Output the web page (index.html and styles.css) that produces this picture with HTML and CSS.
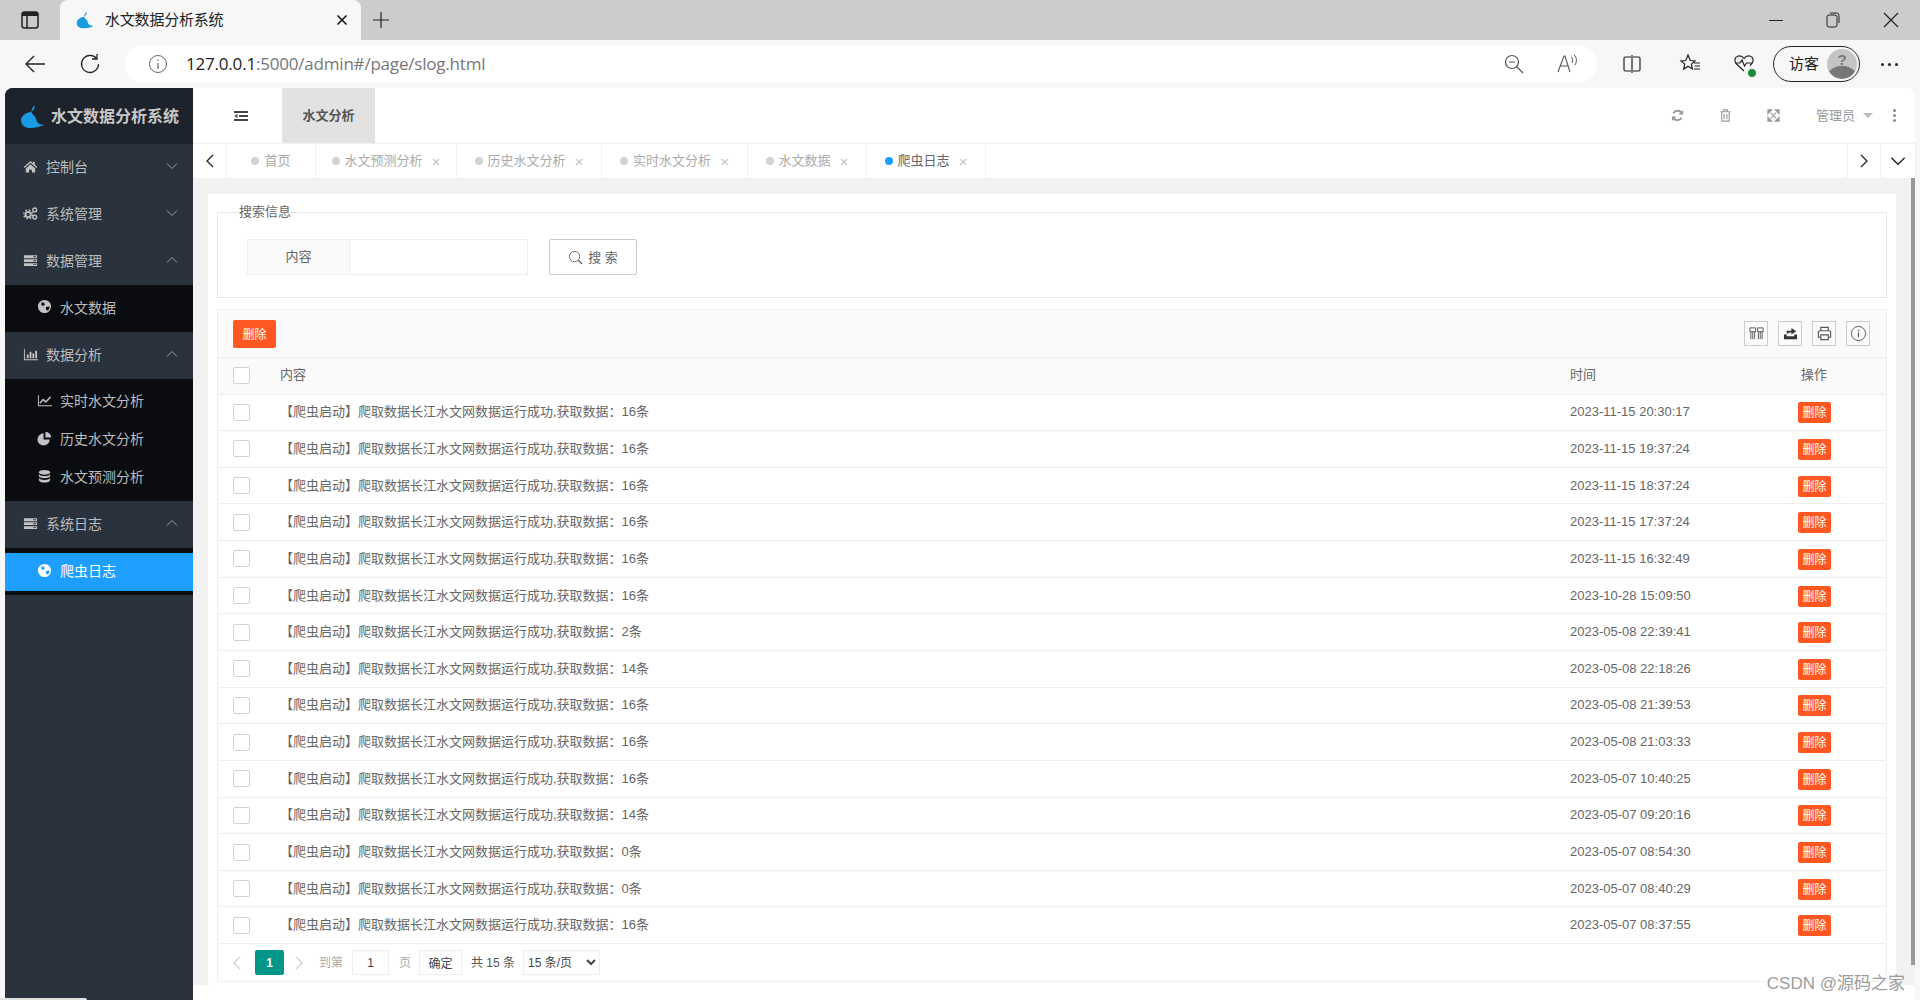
FILE: index.html
```html
<!DOCTYPE html>
<html lang="zh-CN">
<head>
    <meta charset="UTF-8">
    <title>水文数据分析系统</title>
    <link rel="stylesheet" href="styles.css">
</head>
<body>

    <!-- icones usados na pagina -->
    <svg class="sprite" xmlns="http://www.w3.org/2000/svg">
        <symbol id="i-drop" viewBox="0 0 24 24"><path d="M14 1c.5 3-1 5-3 6.500C5 8.500 1 11.500 1 15.500 1 20.500 5 23 10 23c5 0 10-1 13.500-3-3.500 0-6.500-1-7.500-4-.8-3-2-5-4-6.500C10.500 8.200 10.500 5 14 1z"/></symbol>
        <symbol id="i-home" viewBox="0 0 16 16"><path d="M8 2 .8 8.500l.9 1L8 3.900l6.300 5.600.9-1L12.600 6.200V3h-1.900v1.500zM3 10l5-4.400 5 4.400v4.500H9.500v-3h-3v3H3z"/></symbol>
        <symbol id="i-cogs" viewBox="0 0 16 16"><circle cx="5.500" cy="9" r="2.800" fill="none" stroke="currentColor" stroke-width="2"/><circle cx="5.500" cy="9" r="4.700" fill="none" stroke="currentColor" stroke-width="1.500" stroke-dasharray="1.800 1.900"/><circle cx="12.500" cy="4.200" r="2" fill="none" stroke="currentColor" stroke-width="1.500"/><circle cx="12.500" cy="11.800" r="2" fill="none" stroke="currentColor" stroke-width="1.500"/></symbol>
        <symbol id="i-server" viewBox="0 0 16 16"><path d="M1 2.500h14v3H1zM1 6.700h14v3H1zM1 10.900h14v3H1z"/><path d="M11 3.500h3v1h-3zM11 7.700h3v1h-3zM11 11.900h3v1h-3z" fill="#29323d"/></symbol>
        <symbol id="i-globe" viewBox="0 0 16 16"><path fill-rule="evenodd" d="M8 1a7 7 0 1 0 0 14A7 7 0 0 0 8 1zM5 3.500l2.500.5 1 2L6 7.500 4.500 6zm4.500 5 3.500-.5.500 1.500-2 3-2-1.500z"/></symbol>
        <symbol id="i-bar" viewBox="0 0 16 16"><path d="M1 2h1v11h14v1H1zM4 8h2v4H4zM7 5h2v7H7zM10 7h2v5h-2zM13 4h2v8h-2z"/></symbol>
        <symbol id="i-line" viewBox="0 0 16 16"><path d="M1 2h1v11h14v1H1z"/><path d="M3 11l3.500-4 3 2.500L14.500 4" fill="none" stroke="currentColor" stroke-width="1.600"/></symbol>
        <symbol id="i-pie" viewBox="0 0 16 16"><path d="M7 2.500a6.500 6.500 0 1 0 6.500 6.500H7zM9 .8v6h6.200A6.200 6.200 0 0 0 9 .8z"/></symbol>
        <symbol id="i-db" viewBox="0 0 16 16"><ellipse cx="8" cy="3.500" rx="6" ry="2.500"/><path d="M2 5.300c1 1.700 3.500 2.200 6 2.200s5-.5 6-2.200v2.500c-1 1.500-3.500 2.100-6 2.100s-5-.6-6-2.100zM2 9.600c1 1.600 3.500 2.100 6 2.100s5-.5 6-2.100v2.700C13 14 10.500 14.500 8 14.500S3 14 2 12.300z"/></symbol>
        <symbol id="i-down" viewBox="0 0 12 12"><path d="M1 3.500 6 8.500l5-5" fill="none" stroke="currentColor" stroke-width="1"/></symbol>
        <symbol id="i-up" viewBox="0 0 12 12"><path d="M1 8.500 6 3.500l5 5" fill="none" stroke="currentColor" stroke-width="1"/></symbol>
        <symbol id="i-left" viewBox="0 0 12 16"><path d="M9 2 3 8l6 6" fill="none" stroke="currentColor" stroke-width="1.300"/></symbol>
        <symbol id="i-right" viewBox="0 0 12 16"><path d="M3 2l6 6-6 6" fill="none" stroke="currentColor" stroke-width="1.300"/></symbol>
    </svg>

    <!-- barra do navegador -->
    <div class="tabstrip">
        <svg class="win-panel" viewBox="0 0 20 20" width="20" height="20"><rect x="2" y="2" width="16" height="16" rx="2.500" fill="none" stroke="#222" stroke-width="1.500"/><path d="M2 4.500A2.500 2.500 0 0 1 4.500 2h11A2.500 2.500 0 0 1 18 4.500V6H2z" fill="#222"/><path d="M7 6v12" stroke="#222" stroke-width="1.500"/></svg>
        <div class="browser-tab">
            <svg class="browser-tab-icon"><use href="#i-drop"/></svg>
            <span class="browser-tab-title">水文数据分析系统</span>
            <svg class="browser-tab-close" viewBox="0 0 12 12" width="12" height="12"><path d="M1.500 1.500l9 9M10.500 1.500l-9 9" stroke="#111" stroke-width="1.500"/></svg>
        </div>
        <svg class="new-tab" viewBox="0 0 18 18" width="18" height="18"><path d="M9 1v16M1 9h16" stroke="#222" stroke-width="1.200"/></svg>
        <div class="win-btns">
            <svg viewBox="0 0 14 14" width="14" height="14"><path d="M0 7.500h14" stroke="#222"/></svg>
            <svg viewBox="0 0 14 16" width="14" height="16"><rect x="1" y="3" width="10" height="12" rx="2" fill="none" stroke="#222"/><path d="M4 1h6.500A2.500 2.500 0 0 1 13 3.500V11" fill="none" stroke="#222"/></svg>
            <svg viewBox="0 0 16 16" width="16" height="16"><path d="M1 1l14 14M15 1 1 15" stroke="#222" stroke-width="1.200"/></svg>
        </div>
    </div>

    <div class="toolbar">
        <svg class="tool-back" viewBox="0 0 22 20" width="22" height="20"><path d="M21 10H2M10 2l-8 8 8 8" fill="none" stroke="#222" stroke-width="1.400"/></svg>
        <svg class="tool-reload" viewBox="0 0 22 22" width="22" height="22"><path d="M17.500 5.500A8.500 8.500 0 1 0 19.500 11" fill="none" stroke="#222" stroke-width="1.300"/><path d="M18 1v5h-5" fill="none" stroke="#222" stroke-width="1.300"/></svg>
        <div class="urlbar">
            <svg class="url-info" viewBox="0 0 20 20" width="20" height="20"><circle cx="10" cy="10" r="8.500" fill="none" stroke="#666"/><path d="M10 9v6M10 5.500v1.500" stroke="#666" stroke-width="1.200"/></svg>
            <span class="url-text"><b>127.0.0.1</b>:5000/admin#/page/slog.html</span>
            <svg class="url-zoom" viewBox="0 0 20 20" width="20" height="20"><circle cx="8" cy="8" r="6.500" fill="none" stroke="#555" stroke-width="1.200"/><path d="M13 13l6 6M5 8h6" stroke="#555" stroke-width="1.200"/></svg>
            <svg class="url-read" viewBox="0 0 22 20" width="22" height="20"><path d="M1 18 7 2h1l5 16M3.500 12h8" fill="none" stroke="#555" stroke-width="1.100"/><path d="M14 3c2 1 2 4 1 6M17 1c3 2 3 7 1 10" fill="none" stroke="#555"/></svg>
        </div>
        <svg class="tool-icon" viewBox="0 0 20 20" width="20" height="20"><path d="M9 3H3.500A1.500 1.500 0 0 0 2 4.500v11A1.500 1.500 0 0 0 3.500 17H9M11 3h5.500A1.500 1.500 0 0 1 18 4.500v11a1.500 1.500 0 0 1-1.500 1.500H11M10 1v18" fill="none" stroke="#222" stroke-width="1.200"/></svg>
        <svg class="tool-icon tool-fav" viewBox="0 0 22 22" width="22" height="22"><path d="M9 2l2.300 5.500 4.700.4-3.600 3.200 1 5-4.400-2.800-4.400 2.800 1.100-5L2 7.900l4.700-.4zM15 10h6M15.500 13h5.500M15 16h6" fill="none" stroke="#222" stroke-width="1.200"/></svg>
        <span class="tool-health">
            <svg viewBox="0 0 22 22" width="22" height="22"><path d="M11 18 3.500 11C1 8.500 1.500 4.500 4.500 3.300 7 2.400 9.500 3.300 11 5.500c1.500-2.200 4-3.100 6.500-2.200 3 1.200 3.500 5.200 1 7.700L17 12.500" fill="none" stroke="#222" stroke-width="1.200"/><path d="M2 10h5l2-3 2.500 6 2-3h6" fill="none" stroke="#222" stroke-width="1.200"/></svg>
            <span class="health-dot"></span>
        </span>
        <div class="profile">
            <span class="profile-name">访客</span>
            <span class="avatar"><span class="avatar-mark">?</span></span>
        </div>
        <span class="tool-more"><i></i><i></i><i></i></span>
    </div>

    <div class="page">
        <aside class="sidebar">
            <div class="logo">
                <svg class="logo-icon"><use href="#i-drop"/></svg>
                <span>水文数据分析系统</span>
            </div>
            <ul class="menu">
                <li class="menu-item"><svg class="ico"><use href="#i-home"/></svg>控制台<svg class="arrow"><use href="#i-down"/></svg></li>
                <li class="menu-item"><svg class="ico"><use href="#i-cogs"/></svg>系统管理<svg class="arrow"><use href="#i-down"/></svg></li>
                <li class="menu-item"><svg class="ico"><use href="#i-server"/></svg>数据管理<svg class="arrow"><use href="#i-up"/></svg></li>
                <li class="submenu">
                    <div class="sub-item sub-tall"><svg class="ico"><use href="#i-globe"/></svg>水文数据</div>
                </li>
                <li class="menu-item"><svg class="ico"><use href="#i-bar"/></svg>数据分析<svg class="arrow"><use href="#i-up"/></svg></li>
                <li class="submenu">
                    <div class="sub-item"><svg class="ico"><use href="#i-line"/></svg>实时水文分析</div>
                    <div class="sub-item"><svg class="ico"><use href="#i-pie"/></svg>历史水文分析</div>
                    <div class="sub-item"><svg class="ico"><use href="#i-db"/></svg>水文预测分析</div>
                </li>
                <li class="menu-item"><svg class="ico"><use href="#i-server"/></svg>系统日志<svg class="arrow"><use href="#i-up"/></svg></li>
                <li class="submenu">
                    <div class="sub-item active"><svg class="ico"><use href="#i-globe"/></svg>爬虫日志</div>
                </li>
            </ul>
        </aside>

        <div class="content">
            <header class="topbar">
                <svg class="burger" viewBox="0 0 14 10" width="14" height="10"><path d="M0 0h14v2H0zM5 4h9v2H5zM3.500 2.800 .5 5l3 2.200zM0 8h14v2H0z" fill="#444"/></svg>
                <div class="system-name">水文分析</div>
                <div class="top-right">
                    <svg class="top-icon" viewBox="0 0 14 14" width="13" height="13"><path d="M12 5.500A5.200 5.200 0 0 0 2.500 4.500M2 8.500a5.200 5.200 0 0 0 9.500 1" fill="none" stroke="#999" stroke-width="2"/><path d="M13 1v5H8zM1 13V8h5z" fill="#999"/></svg>
                    <svg class="top-icon" viewBox="0 0 14 14" width="13" height="13"><path d="M1.500 3h11M5 3V1h4v2M3 3.500V13h8V3.500M5.500 5.500v5.500M8.500 5.500v5.500" fill="none" stroke="#999" stroke-width="1.200"/></svg>
                    <svg class="top-icon" viewBox="0 0 14 14" width="13" height="13"><path d="M1 1h4L1 5zM13 1v4L9 1zM1 13V9l4 4zM13 13H9l4-4zM4 4l6 6M10 4l-6 6" fill="#999" stroke="#999" stroke-width="1.200"/></svg>
                    <span class="admin">管理员<i class="caret"></i></span>
                    <span class="top-dots"><i></i><i></i><i></i></span>
                </div>
            </header>

            <nav class="tabs">
                <button class="tab-arrow"><svg><use href="#i-left"/></svg></button>
                <div class="tab"><i class="dot"></i><span class="tab-name">首页</span></div>
                <div class="tab"><i class="dot"></i><span class="tab-name">水文预测分析</span><span class="tab-close">×</span></div>
                <div class="tab"><i class="dot"></i><span class="tab-name">历史水文分析</span><span class="tab-close">×</span></div>
                <div class="tab"><i class="dot"></i><span class="tab-name">实时水文分析</span><span class="tab-close">×</span></div>
                <div class="tab"><i class="dot"></i><span class="tab-name">水文数据</span><span class="tab-close">×</span></div>
                <div class="tab tab-on"><i class="dot"></i><span class="tab-name">爬虫日志</span><span class="tab-close">×</span></div>
                <button class="tab-arrow tab-next"><svg><use href="#i-right"/></svg></button>
                <button class="tab-arrow tab-down"><svg><use href="#i-down"/></svg></button>
            </nav>

            <main class="main">
                <div class="card">
                    <fieldset class="search">
                        <legend>搜索信息</legend>
                        <div class="search-row">
                            <label class="search-label">内容</label>
                            <input class="search-input" type="text">
                            <button class="search-btn">
                                <svg viewBox="0 0 16 16" width="15" height="15"><circle cx="7" cy="7" r="5.500" fill="none" stroke="#666"/><path d="M11 11l4 4" stroke="#666" stroke-width="1.500"/></svg>
                                <span>搜 索</span>
                            </button>
                        </div>
                    </fieldset>

                    <div class="list">
                        <div class="list-tools">
                            <button class="btn-del btn-del-big">删除</button>
                            <div class="list-icons">
                                <span class="tool-box"><svg viewBox="0 0 16 16" width="15" height="15"><path d="M1 2h6v4H1zM9 2h6v4H9zM2 6v8M4 6v8M6 6v8M10 6v8M12 6v8M14 6v8" fill="none" stroke="#555"/></svg></span>
                                <span class="tool-box"><svg viewBox="0 0 16 16" width="15" height="15"><path d="M1 9h3v2h8V9h3v5H1zM4 8V5h5V2l5 3.500L9 9V7H6v1z" fill="#333"/></svg></span>
                                <span class="tool-box"><svg viewBox="0 0 16 16" width="15" height="15"><path d="M4 5V1.500h8V5M4 12H1.500V6.500A1.500 1.500 0 0 1 3 5h10a1.500 1.500 0 0 1 1.500 1.500V12H12M4 9.500h8v5H4z" fill="none" stroke="#555" stroke-width="1.200"/></svg></span>
                                <span class="tool-box"><svg viewBox="0 0 18 18" width="17" height="17"><circle cx="9" cy="9" r="7.500" fill="none" stroke="#555"/><path d="M9 8v5M9 5v1.500" stroke="#555" stroke-width="1.200"/></svg></span>
                            </div>
                        </div>
                        <table class="log-table">
                            <colgroup>
                                <col class="col-check"><col><col class="col-time"><col class="col-op">
                            </colgroup>
                            <thead>
                                <tr><th><span class="check"></span></th><th class="cell-text">内容</th><th class="cell-text">时间</th><th class="cell-text th-op">操作</th></tr>
                            </thead>
                            <tbody>
                                <tr><td><span class="check"></span></td><td class="cell-text">【爬虫启动】爬取数据长江水文网数据运行成功,获取数据：16条</td><td class="cell-date">2023-11-15 20:30:17</td><td><button class="btn-del">删除</button></td></tr>
                                <tr><td><span class="check"></span></td><td class="cell-text">【爬虫启动】爬取数据长江水文网数据运行成功,获取数据：16条</td><td class="cell-date">2023-11-15 19:37:24</td><td><button class="btn-del">删除</button></td></tr>
                                <tr><td><span class="check"></span></td><td class="cell-text">【爬虫启动】爬取数据长江水文网数据运行成功,获取数据：16条</td><td class="cell-date">2023-11-15 18:37:24</td><td><button class="btn-del">删除</button></td></tr>
                                <tr><td><span class="check"></span></td><td class="cell-text">【爬虫启动】爬取数据长江水文网数据运行成功,获取数据：16条</td><td class="cell-date">2023-11-15 17:37:24</td><td><button class="btn-del">删除</button></td></tr>
                                <tr><td><span class="check"></span></td><td class="cell-text">【爬虫启动】爬取数据长江水文网数据运行成功,获取数据：16条</td><td class="cell-date">2023-11-15 16:32:49</td><td><button class="btn-del">删除</button></td></tr>
                                <tr><td><span class="check"></span></td><td class="cell-text">【爬虫启动】爬取数据长江水文网数据运行成功,获取数据：16条</td><td class="cell-date">2023-10-28 15:09:50</td><td><button class="btn-del">删除</button></td></tr>
                                <tr><td><span class="check"></span></td><td class="cell-text">【爬虫启动】爬取数据长江水文网数据运行成功,获取数据：2条</td><td class="cell-date">2023-05-08 22:39:41</td><td><button class="btn-del">删除</button></td></tr>
                                <tr><td><span class="check"></span></td><td class="cell-text">【爬虫启动】爬取数据长江水文网数据运行成功,获取数据：14条</td><td class="cell-date">2023-05-08 22:18:26</td><td><button class="btn-del">删除</button></td></tr>
                                <tr><td><span class="check"></span></td><td class="cell-text">【爬虫启动】爬取数据长江水文网数据运行成功,获取数据：16条</td><td class="cell-date">2023-05-08 21:39:53</td><td><button class="btn-del">删除</button></td></tr>
                                <tr><td><span class="check"></span></td><td class="cell-text">【爬虫启动】爬取数据长江水文网数据运行成功,获取数据：16条</td><td class="cell-date">2023-05-08 21:03:33</td><td><button class="btn-del">删除</button></td></tr>
                                <tr><td><span class="check"></span></td><td class="cell-text">【爬虫启动】爬取数据长江水文网数据运行成功,获取数据：16条</td><td class="cell-date">2023-05-07 10:40:25</td><td><button class="btn-del">删除</button></td></tr>
                                <tr><td><span class="check"></span></td><td class="cell-text">【爬虫启动】爬取数据长江水文网数据运行成功,获取数据：14条</td><td class="cell-date">2023-05-07 09:20:16</td><td><button class="btn-del">删除</button></td></tr>
                                <tr><td><span class="check"></span></td><td class="cell-text">【爬虫启动】爬取数据长江水文网数据运行成功,获取数据：0条</td><td class="cell-date">2023-05-07 08:54:30</td><td><button class="btn-del">删除</button></td></tr>
                                <tr><td><span class="check"></span></td><td class="cell-text">【爬虫启动】爬取数据长江水文网数据运行成功,获取数据：0条</td><td class="cell-date">2023-05-07 08:40:29</td><td><button class="btn-del">删除</button></td></tr>
                                <tr><td><span class="check"></span></td><td class="cell-text">【爬虫启动】爬取数据长江水文网数据运行成功,获取数据：16条</td><td class="cell-date">2023-05-07 08:37:55</td><td><button class="btn-del">删除</button></td></tr>
                            </tbody>
                        </table>
                        <div class="pager">
                            <svg class="pager-arrow"><use href="#i-left"/></svg>
                            <span class="pager-cur">1</span>
                            <svg class="pager-arrow"><use href="#i-right"/></svg>
                            <span class="pager-text pager-to">到第</span>
                            <input class="pager-input" type="text" value="1">
                            <span class="pager-text">页</span>
                            <button class="pager-ok">确定</button>
                            <span class="pager-total">共 15 条</span>
                            <select class="pager-size"><option>15 条/页</option></select>
                        </div>
                    </div>
                </div>
                <div class="scroll-thumb"></div>
            </main>
            <div class="watermark">CSDN @源码之家</div>
        </div>
    </div>
    <div class="status-bubble"></div>

</body>
</html>
```

FILE: styles.css
```css
* {
    margin: 0;
    padding: 0;
    box-sizing: border-box;
}
html, body {
    height: 100%;
    overflow: hidden;
}
body {
    font-family: "Liberation Sans", "Noto Sans CJK SC", sans-serif;
    font-size: 13px;
    color: #666;
    background-color: #f7f7f7;
    position: relative;
}
.sprite {
    display: none;
}
button {
    font-family: inherit;
    cursor: pointer;
}
i {
    font-style: normal;
}

/* navegador */
.tabstrip {
    height: 40px;
    background-color: #cccccc;
    display: flex;
    align-items: center;
    padding-left: 20px;
}
.win-panel {
    margin-right: 20px;
}
.browser-tab {
    width: 301px;
    height: 40px;
    background-color: #f7f7f7;
    border-radius: 8px 8px 0 0;
    display: flex;
    align-items: center;
    padding-left: 16px;
}
.browser-tab-icon {
    width: 18px;
    height: 18px;
    fill: #1a9ae0;
}
.browser-tab-title {
    margin-left: 11px;
    padding-bottom: 3px;
    font-size: 15px;
    letter-spacing: -0.2px;
    color: #222;
}
.browser-tab-close {
    margin-left: auto;
    margin-right: 13px;
}
.new-tab {
    margin-left: 11px;
}
.win-btns {
    margin-left: auto;
    display: flex;
    align-items: center;
    gap: 43px;
    padding-right: 21px;
}
.toolbar {
    height: 48px;
    background-color: #f7f7f7;
    display: flex;
    align-items: center;
    padding-left: 24px;
}
.tool-reload {
    margin-left: 33px;
}
.urlbar {
    width: 1472px;
    height: 38px;
    margin-left: 24px;
    background-color: #fff;
    border-radius: 19px;
    display: flex;
    align-items: center;
    padding-left: 23px;
}
.url-text {
    margin-left: 18px;
    padding-bottom: 2px;
    font-family: "Open Sans", sans-serif;
    font-size: 17px;
    letter-spacing: -0.2px;
    color: #777;
}
.url-text b {
    font-weight: normal;
    color: #222;
}
.url-zoom {
    margin-left: auto;
}
.url-read {
    margin-left: 33px;
    margin-right: 18px;
}
.tool-icon {
    margin-left: 25px;
}
.tool-fav {
    margin-left: 37px;
}
.tool-health {
    margin-left: 32px;
    position: relative;
    display: flex;
}
.health-dot {
    position: absolute;
    right: -2px;
    bottom: -3px;
    width: 10px;
    height: 10px;
    border-radius: 50%;
    background-color: #1a8a3a;
    border: 1px solid #f7f7f7;
}
.profile {
    width: 87px;
    height: 36px;
    margin-left: 18px;
    border: 1.5px solid #222;
    border-radius: 18px;
    display: flex;
    align-items: center;
    justify-content: space-between;
    padding: 0 2px 0 15px;
    font-size: 15px;
    color: #222;
}
.profile-name {
    padding-bottom: 3px;
}
.avatar {
    width: 30px;
    height: 30px;
    border-radius: 50%;
    background: radial-gradient(circle at 50% 115%, #777 0 46%, #c4c4c4 48%);
    display: flex;
    justify-content: center;
}
.avatar-mark {
    font-weight: bold;
    font-size: 15px;
    line-height: 22px;
    color: #777;
}
.tool-more {
    margin-left: 21px;
    display: flex;
    gap: 4px;
}
.tool-more i {
    width: 3px;
    height: 3px;
    border-radius: 50%;
    background-color: #222;
}

/* pagina */
.page {
    height: 912px;
    display: flex;
    padding: 0 5px;
}
.sidebar {
    width: 188px;
    background-color: #29323d;
    border-radius: 8px 0 0 0;
    flex-shrink: 0;
    overflow: hidden;
}
.logo {
    height: 56px;
    background-color: #1c232d;
    display: flex;
    align-items: center;
    padding-left: 15px;
    font-size: 16px;
    font-weight: bold;
    color: #c8c8c8;
}
.logo span {
    padding-bottom: 2px;
}
.logo-icon {
    width: 25px;
    height: 25px;
    fill: #1a9ae0;
    margin-right: 6px;
}
.menu {
    list-style: none;
}
.menu-item {
    height: 47px;
    display: flex;
    align-items: center;
    padding: 0 0 3px 18px;
    font-size: 14px;
    color: #bdbdbd;
}
.ico {
    width: 15px;
    height: 15px;
    fill: #c2c2c2;
    color: #c2c2c2;
    margin-right: 8px;
}
.arrow {
    width: 12px;
    height: 12px;
    color: #9a9fa5;
    margin-left: auto;
    margin-right: 15px;
}
.submenu {
    background-color: #0a0c10;
    padding: 4px 0;
}
.sub-item {
    height: 38px;
    display: flex;
    align-items: center;
    padding: 0 0 4px 32px;
    font-size: 14px;
    color: #bdbdbd;
}
.sub-tall {
    height: 39px;
}
.sub-item.active {
    background-color: #1e9fff;
    color: #fff;
    margin-top: 1px;
}
.active .ico {
    fill: #fff;
}

.content {
    flex: 1;
    background-color: #fff;
    position: relative;
    display: flex;
    flex-direction: column;
    border-radius: 0 8px 0 0;
    min-width: 0;
}
.topbar {
    height: 56px;
    display: flex;
    align-items: center;
    padding-left: 41px;
    border-bottom: 1px solid #f1f1f1;
    flex-shrink: 0;
}
.system-name {
    width: 93px;
    height: 55px;
    margin-left: 34px;
    padding-bottom: 2px;
    background-color: #e2e2e2;
    display: flex;
    align-items: center;
    justify-content: center;
    font-weight: bold;
    color: #555;
}
.top-right {
    margin-left: auto;
    display: flex;
    align-items: center;
    color: #999;
}
.top-icon {
    margin-right: 35px;
}
.admin {
    display: flex;
    align-items: center;
    font-size: 13px;
    margin-left: 1px;
    margin-right: 1px;
    padding-bottom: 2px;
}
.caret {
    width: 0;
    height: 0;
    margin: 2px 0 0 8px;
    border: 5px solid transparent;
    border-top-color: #bbb;
    border-bottom-width: 0;
}
.top-dots {
    display: flex;
    flex-direction: column;
    gap: 2px;
    margin: 0 19px 0 19px;
}
.top-dots i {
    width: 3px;
    height: 3px;
    background-color: #888;
    border-radius: 50%;
}

.tabs {
    height: 34px;
    display: flex;
    align-items: stretch;
    background-color: #fff;
    box-shadow: 0 1px 2px rgba(0, 0, 0, 0.08);
    position: relative;
    flex-shrink: 0;
}
.tab-arrow {
    width: 34px;
    background: none;
    border: none;
    border-right: 1px solid #f0f0f0;
    display: flex;
    align-items: center;
    justify-content: center;
    color: #222;
}
.tab-arrow svg {
    width: 12px;
    height: 16px;
}
.tab-next {
    margin-left: auto;
    border-left: 1px solid #f0f0f0;
    border-right: 1px solid #f0f0f0;
}
.tab-down {
    border-right: none;
}
.tab-down svg {
    width: 16px;
    height: 16px;
}
.tab {
    display: flex;
    align-items: center;
    justify-content: center;
    border-right: 1px solid #f2f2f2;
    color: #aaa;
}
.tab:nth-child(2) { width: 89px; }
.tab:nth-child(3) { width: 141px; }
.tab:nth-child(4) { width: 145px; }
.tab:nth-child(5) { width: 146px; }
.tab:nth-child(6) { width: 119px; }
.tab:nth-child(7) { width: 119px; }
.tab-name {
    padding-bottom: 3px;
}
.dot {
    width: 8px;
    height: 8px;
    border-radius: 50%;
    background-color: #d2d2d2;
    margin-right: 5px;
}
.tab-close {
    margin-left: 9px;
    font-size: 15px;
    line-height: 15px;
    color: #c2c2c2;
}
.tab-on {
    color: #666;
}
.tab-on .dot {
    background-color: #1e9fff;
}

.main {
    height: 807px;
    background-color: #f2f2f2;
    padding: 16px 19px 0 15px;
    position: relative;
    flex-shrink: 0;
}
.scroll-thumb {
    position: absolute;
    top: 0;
    right: 0;
    width: 4px;
    height: 787px;
    background-color: #999;
}
.card {
    height: 791px;
    background-color: #fff;
    border-radius: 2px;
    padding: 8px 9px 0;
}
.search {
    border: 1px solid #e6e6e6;
    height: 96px;
    padding: 17px 29px 0;
}
.search legend {
    margin-left: -8px;
    line-height: 20px;
    padding-bottom: 2px;
    height: 20px;
    color: #666;
}
.search-row {
    display: flex;
    align-items: flex-start;
}
.search-label {
    width: 103px;
    height: 36px;
    padding-bottom: 3px;
    border: 1px solid #eee;
    background-color: #fafafa;
    display: flex;
    align-items: center;
    justify-content: center;
}
.search-input {
    width: 178px;
    height: 36px;
    border: 1px solid #eee;
    border-left: none;
    outline: none;
}
.search-btn {
    width: 88px;
    height: 36px;
    margin-left: 21px;
    background-color: #fff;
    border: 1px solid #c9c9c9;
    border-radius: 2px;
    color: #666;
    font-size: 13px;
    display: flex;
    align-items: center;
    justify-content: center;
    gap: 5px;
}
.search-btn span {
    padding-bottom: 2px;
}
.list {
    margin-top: 11px;
    border: 1px solid #eee;
    border-top-color: #f2f2f2;
}
.list-tools {
    height: 48px;
    background-color: #fafafa;
    border-bottom: 1px solid #eee;
    display: flex;
    align-items: center;
    padding: 0 16px 0 15px;
}
.btn-del {
    width: 33px;
    height: 21px;
    padding-bottom: 2px;
    border: none;
    border-radius: 2px;
    background-color: #ff5722;
    color: #fff;
    font-size: 12px;
    display: block;
    margin: 1px 0 0 1px;
}
.btn-del-big {
    width: 43px;
    height: 28px;
    padding-bottom: 0;
    margin: 0;
}
.list-icons {
    margin-left: auto;
    display: flex;
    gap: 10px;
}
.tool-box {
    width: 24px;
    height: 25px;
    border: 1px solid #ccc;
    display: flex;
    align-items: center;
    justify-content: center;
}
.log-table {
    width: 100%;
    table-layout: fixed;
    border-collapse: collapse;
}
.col-check {
    width: 62px;
}
.col-time {
    width: 227px;
}
.col-op {
    width: 89px;
}
.log-table th {
    height: 36px;
    padding: 0;
    background-color: #fafafa;
    font-weight: normal;
    text-align: left;
    border-bottom: 1px solid #eee;
}
.log-table td {
    height: 36.65px;
    border-bottom: 1px solid #eee;
    padding: 0;
    color: #666;
}
.log-table .cell-text {
    padding-bottom: 3px;
}
.log-table th.cell-text {
    padding-bottom: 5px;
}
.log-table .cell-date {
    padding-bottom: 1px;
}
.log-table .th-op {
    padding-left: 4px;
}
.check {
    display: block;
    width: 17px;
    height: 17px;
    margin-left: 15px;
    background-color: #fff;
    border: 1px solid #d2d2d2;
    border-radius: 2px;
}
.pager {
    height: 37px;
    display: flex;
    align-items: center;
    padding-left: 13px;
    font-size: 12px;
}
.pager-arrow {
    width: 12px;
    height: 16px;
    color: #d2d2d2;
}
.pager-cur {
    width: 29px;
    height: 25px;
    margin: 0 9px 0 12px;
    background-color: #009688;
    color: #fff;
    font-weight: bold;
    border-radius: 2px;
    display: flex;
    align-items: center;
    justify-content: center;
}
.pager-text {
    color: #aaa;
    margin-left: 10px;
    padding-bottom: 2px;
}
.pager-to {
    margin-left: 14px;
    margin-right: 9px;
}
.pager-input {
    width: 37px;
    height: 25px;
    border: 1px solid #eee;
    text-align: center;
    outline: none;
    font-size: 12px;
    color: #444;
    font-family: inherit;
}
.pager-ok {
    width: 43px;
    height: 25px;
    margin-left: 8px;
    background-color: #fff;
    border: 1px solid #eee;
    font-size: 12px;
    color: #444;
}
.pager-total {
    margin-left: 9px;
    padding-bottom: 2px;
    color: #555;
}
.pager-size {
    width: 77px;
    height: 25px;
    margin-left: 8px;
    background-color: #fff;
    border: 1px solid #eee;
    outline: none;
    font-family: inherit;
    font-size: 12px;
    color: #444;
}
.watermark {
    position: absolute;
    right: 10px;
    bottom: 6px;
    font-size: 17px;
    color: #9c9c9c;
}
.status-bubble {
    position: absolute;
    left: 0;
    bottom: 0;
    width: 87px;
    height: 2px;
    background-color: #e0e0e0;
    border-radius: 0 4px 0 0;
}
```
